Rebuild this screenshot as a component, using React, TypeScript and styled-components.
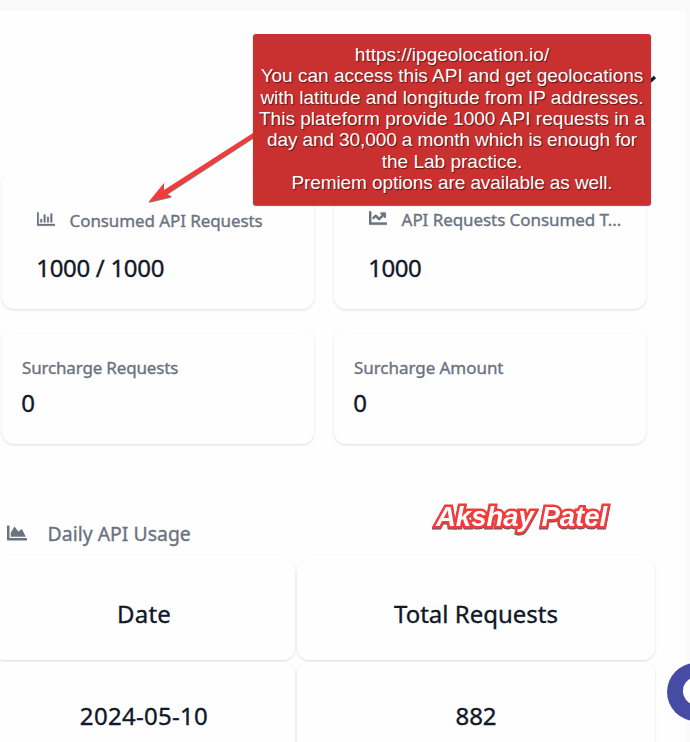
import React from 'react';
import styled, { createGlobalStyle } from 'styled-components';
import { FaRegChartBar, FaChartLine, FaChartArea } from 'react-icons/fa';

const GlobalStyle = createGlobalStyle`
  * { box-sizing: border-box; }
  body { margin: 0; overflow: hidden; background: #f9f9f9; }
`;

const Page = styled.div`
  position: relative;
  width: 690px;
  height: 742px;
  padding: 11px 4px 0 0;
  overflow: hidden;
  background: #f9f9f9;
  font-family: "Noto Sans", "Open Sans", sans-serif;
`;

const Panel = styled.main`
  height: 731px;
  padding-top: 160px;
  background: #fefefe;
`;

const CardGrid = styled.section`
  display: grid;
  grid-template-columns: 312px 312px;
  grid-template-rows: 138px 115px;
  gap: 20px;
  padding-left: 2px;
`;

const surface = `
  background: #fefefe;
  border-radius: 12px;
  box-shadow: 0 1px 3px rgba(0, 0, 0, 0.09), 0 1px 2px rgba(0, 0, 0, 0.05);
`;

const Card = styled.article<{ $top: number; $left: number; $gap: number }>`
  ${surface}
  display: flex;
  flex-direction: column;
  gap: ${(p) => p.$gap}px;
  padding: ${(p) => p.$top}px 20px 0 ${(p) => p.$left}px;
`;

const Label = styled.div`
  display: flex;
  align-items: flex-start;
  gap: 14.6px;
  height: 24px;
  color: #6b7280;
  white-space: nowrap;

  svg { flex: none; margin-top: 1px; stroke: currentColor; stroke-width: 10px; }
`;

const LabelText = styled.span<{ $spacing: number }>`
  font-size: 17px;
  line-height: 24px;
  letter-spacing: ${(p) => p.$spacing}px;
  -webkit-text-stroke: 0.35px currentColor;
`;

const Value = styled.div<{ $spacing?: number }>`
  color: #111827;
  font-size: 24px;
  line-height: 32px;
  letter-spacing: ${(p) => p.$spacing ?? -0.3}px;
  -webkit-text-stroke: 0.35px currentColor;
  white-space: nowrap;
`;

const CardValue = styled(Value)`
  margin-left: -0.8px;
`;

const SectionTitle = styled.h2`
  display: flex;
  align-items: flex-start;
  gap: 20.6px;
  height: 28px;
  margin: 76px 0 12px;
  padding-left: 7px;
  color: #6b7280;
  font-size: 19.4px;
  font-weight: 400;
  line-height: 28px;
  letter-spacing: 0.02px;
  -webkit-text-stroke: 0.35px currentColor;

  svg { margin-top: 3px; }
`;

const Table = styled.section`
  display: grid;
  grid-template-columns: 302px 358px;
  grid-auto-rows: 100px;
  gap: 2px;
  margin-left: -7px;
`;

const Cell = styled.div`
  ${surface}
  display: flex;
  justify-content: center;
  padding-top: 38px;
`;

const Chevron = styled.svg`
  position: absolute;
  left: 636px;
  top: 74px;
`;

const Arrow = styled.svg`
  position: absolute;
  left: 140px;
  top: 125px;
  filter: drop-shadow(0 1px 0.5px rgba(0, 0, 0, 0.5));
`;

const Callout = styled.aside`
  position: absolute;
  left: 253px;
  top: 34px;
  width: 398px;
  height: 171px;
  padding: 10px 0 0;
  border-radius: 3px;
  background: #c93030;
  box-shadow: 0 1px 1px rgba(0, 0, 0, 0.6);
  color: #fff;
  font: 19px/21.33px "Liberation Sans", Arial, sans-serif;
  text-align: center;
  text-shadow: 1px 1px 1px rgba(0, 0, 0, 0.55);
  white-space: nowrap;
`;

const CalloutLine = styled.div<{ $spacing: number }>`
  letter-spacing: ${(p) => p.$spacing}px;
`;

const Signature = styled.div`
  position: absolute;
  left: 436px;
  top: 501px;
  color: #fff;
  font: italic bold 27.5px/32px "Liberation Sans", Arial, sans-serif;
  white-space: nowrap;
  -webkit-text-stroke: 5px #f23c3c;
  paint-order: stroke fill;
  stroke-linejoin: round;
  filter: drop-shadow(0 1px 0.6px rgba(0, 0, 0, 0.65));
`;

const ChatButton = styled.div`
  position: absolute;
  left: 667px;
  top: 663px;
  width: 58px;
  height: 58px;
  padding: 14px 0 0 16px;
  border-radius: 50%;
  background: #464ca3;
`;

const ChatMark = styled.div`
  width: 28px;
  height: 28px;
  border-radius: 50%;
  background: #fff;
`;

const calloutLines = [
  { text: 'https://ipgeolocation.io/', spacing: 0 },
  { text: 'You can access this API and get geolocations', spacing: 0 },
  { text: 'with latitude and longitude from IP addresses.', spacing: -0.02 },
  { text: 'This plateform provide 1000 API requests in a', spacing: 0.04 },
  { text: 'day and 30,000 a month which is enough for', spacing: -0.09 },
  { text: 'the Lab practice.', spacing: 0 },
  { text: 'Premiem options are available as well.', spacing: -0.08 },
];

const cells = [
  { text: 'Date', spacing: 0.2 },
  { text: 'Total Requests', spacing: 0 },
  { text: '2024-05-10', spacing: 0.3 },
  { text: '882', spacing: -0.1 },
];

export default function App() {
  return (
    <Page>
      <GlobalStyle />
      <Panel>
        <CardGrid>
          <Card $top={38} $left={35} $gap={19}>
            <Label>
              <FaRegChartBar size={18} />
              <LabelText $spacing={-0.1}>Consumed API Requests</LabelText>
            </Label>
            <CardValue>1000 / 1000</CardValue>
          </Card>
          <Card $top={37} $left={35} $gap={20}>
            <Label>
              <FaChartLine size={18} />
              <LabelText $spacing={-0.07}>API Requests Consumed T...</LabelText>
            </Label>
            <CardValue $spacing={-0.5}>1000</CardValue>
          </Card>
          <Card $top={27} $left={20} $gap={7}>
            <Label><LabelText $spacing={-0.17}>Surcharge Requests</LabelText></Label>
            <CardValue>0</CardValue>
          </Card>
          <Card $top={27} $left={20} $gap={7}>
            <Label><LabelText $spacing={-0.05}>Surcharge Amount</LabelText></Label>
            <CardValue>0</CardValue>
          </Card>
        </CardGrid>
        <SectionTitle>
          <FaChartArea size={20} />
          <span>Daily API Usage</span>
        </SectionTitle>
        <Table>
          {cells.map((c) => (
            <Cell key={c.text}><Value $spacing={c.spacing}>{c.text}</Value></Cell>
          ))}
        </Table>
      </Panel>
      <Chevron width="22" height="14" viewBox="0 0 22 14" fill="none" stroke="#0b1f30" strokeWidth="3.4">
        <path d="M2 3l8 8 9-8" />
      </Chevron>
      <Arrow width="120" height="85" viewBox="0 0 120 85" fill="#f23c3c">
        <path d="M8.5 77L24 58V65L113 8V13L27 69L32 71.5Z" />
      </Arrow>
      <Callout>
        {calloutLines.map((line) => (
          <CalloutLine key={line.text} $spacing={line.spacing}>{line.text}</CalloutLine>
        ))}
      </Callout>
      <Signature>Akshay Patel</Signature>
      <ChatButton><ChatMark /></ChatButton>
    </Page>
  );
}
